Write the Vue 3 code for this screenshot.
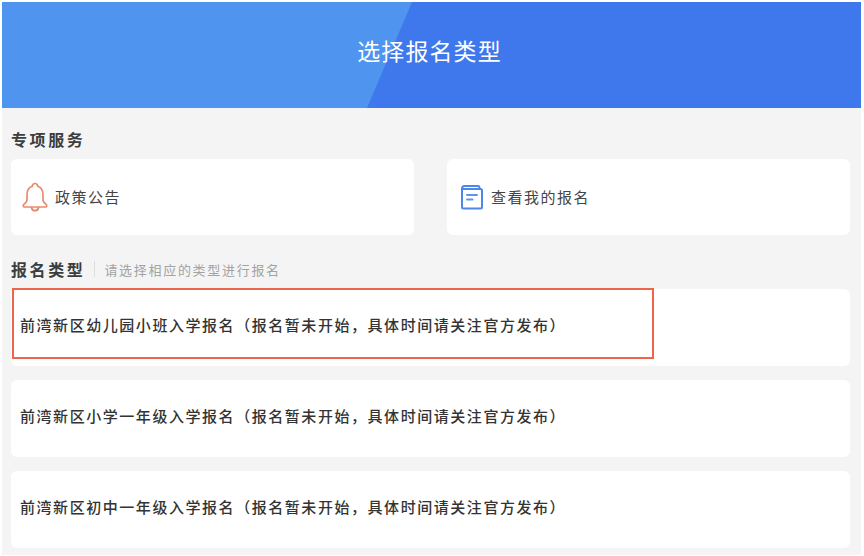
<script setup>
const services = [
  { name: '政策公告', icon: 'bell' },
  { name: '查看我的报名', icon: 'doc' }
]
const suffix = '（报名暂未开始，具体时间请关注官方发布）'
const rows = ['前湾新区幼儿园小班入学报名', '前湾新区小学一年级入学报名', '前湾新区初中一年级入学报名']
</script>

<template>
  <div class="frame">
    <header class="hero"><h1>选择报名类型</h1></header>
    <main class="content">
      <h2 class="section-title">专项服务</h2>
      <div class="services">
        <a v-for="s in services" :key="s.name" class="service" :class="s.icon">
          <svg v-if="s.icon === 'bell'" class="icon" width="28" height="32" viewBox="0 0 28 32" fill="none" stroke="#e98a6e" stroke-width="1.7" stroke-linejoin="round" stroke-linecap="round">
            <path d="M14 2.500c1.600 0 2.600 1.200 2.800 2.800 3.600 1.300 5.200 4.400 5.200 8.200v5.500c0 1.800 1.400 3 3.300 4.600 1 .9.500 2.400-.8 2.400H3.500c-1.300 0-1.800-1.500-.8-2.400C4.600 22 6 20.800 6 19v-5.500c0-3.800 1.600-6.900 5.200-8.200C11.400 3.700 12.400 2.500 14 2.500z" />
            <path d="M10.500 26.500c.3 2 1.700 3.200 3.500 3.200s3.200-1.200 3.500-3.200" />
          </svg>
          <svg v-else class="icon" width="24" height="26" viewBox="0 0 24 26" fill="none" stroke="#4f86ea" stroke-width="2" stroke-linejoin="round" stroke-linecap="round">
            <path d="M2 5V23C2 23.900 2.600 24.500 3.500 24.500H20.500C21.400 24.500 22 23.900 22 23V6.500C22 5.600 21.400 5 20.500 5H2Z" />
            <path d="M2 5C2 3 3 2 4.500 2H18C19 2 19.500 2.700 19.500 4V5" />
            <path d="M7 11H17M7 15.500H12.500" stroke="#5f95ee" />
          </svg>
          <span class="service-name">{{ s.name }}</span>
        </a>
      </div>
      <div class="type-head">
        <h2 class="section-title">报名类型</h2>
        <span class="divider"></span>
        <span class="hint">请选择相应的类型进行报名</span>
      </div>
      <ul class="rows">
        <li v-for="(r, i) in rows" :key="r" class="row">
          {{ r + suffix }}
          <span v-if="i === 0" class="mark"></span>
        </li>
      </ul>
    </main>
  </div>
</template>

<style scoped>
.frame {
  width: 859px;
  height: 553px;
  margin: 2px 0 0 2px;
  background: #f4f4f4;
  font-family: "Noto Sans CJK SC", "Noto Sans", sans-serif;
  overflow: hidden;
}
.hero {
  position: relative;
  height: 106px;
  display: flex;
  align-items: center;
  justify-content: center;
  padding: 0 4px 10px 0;
  box-sizing: border-box;
  background: #3f78ec;
  overflow: hidden;
}
.hero::before {
  content: "";
  position: absolute;
  inset: 0;
  background: #4f94ee;
  clip-path: polygon(0 0, 410px 0, 365px 100%, 0 100%);
}
.hero h1 {
  position: relative;
  margin: 0;
  color: #fff;
  font-size: 23px;
  font-weight: 400;
  letter-spacing: 1.1px;
  line-height: 30px;
}
.content {
  padding: 19px 11px 0 9px;
}
.section-title {
  margin: 0;
  color: #3d3d3d;
  font-size: 16px;
  font-weight: 700;
  letter-spacing: 2.6px;
  line-height: 24px;
}
.services {
  display: grid;
  grid-template-columns: 403px 403px;
  column-gap: 33px;
  margin-top: 8px;
}
.service {
  display: flex;
  align-items: center;
  height: 76px;
  background: #fff;
  border-radius: 6px;
  color: #444;
  font-size: 15px;
  letter-spacing: 1.5px;
}
.service-name { padding-bottom: 2px; }
.service.bell { padding-left: 10px; gap: 6px; }
.service.doc { padding-left: 13px; gap: 7px; }
.icon { flex: none; }
.type-head {
  display: flex;
  align-items: center;
  margin-top: 22px;
}
.divider {
  width: 1px;
  height: 16px;
  margin: 0 9px;
  background: #ddd;
}
.hint {
  color: #a3a3a3;
  font-size: 13px;
  letter-spacing: 1.7px;
}
.rows {
  list-style: none;
  margin: 8px 0 0;
  padding: 0;
  display: flex;
  flex-direction: column;
  gap: 14px;
  width: 839px;
}
.row {
  position: relative;
  display: flex;
  align-items: center;
  height: 77px;
  padding-left: 9px;
  padding-bottom: 7px;
  box-sizing: border-box;
  background: #fff;
  border-radius: 6px;
  color: #333;
  font-size: 15px;
  font-weight: 500;
  letter-spacing: 1.55px;
}
.mark {
  position: absolute;
  left: 1px;
  top: -1px;
  width: 642px;
  height: 71px;
  box-sizing: border-box;
  border: 2px solid #ee6549;
}
</style>
